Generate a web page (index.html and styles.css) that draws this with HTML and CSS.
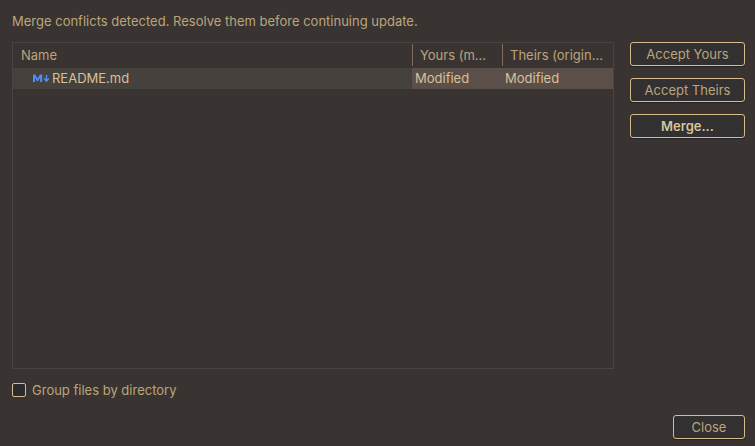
FILE: index.html
```html
<!DOCTYPE html>
<html lang="en">
<head>
<meta charset="utf-8">
<title>Conflicts</title>
<link rel="stylesheet" href="styles.css">
</head>
<body>
<main class="dialog">
  <p class="message">Merge conflicts detected. Resolve them before continuing update.</p>
  <div class="content">
    <div class="files">
      <table class="table">
        <colgroup><col><col class="col-yours"><col class="col-theirs"></colgroup>
        <thead>
          <tr>
            <th scope="col"><div class="head">Name</div></th>
            <th scope="col"><div class="head divided">Yours (m...</div></th>
            <th scope="col"><div class="head divided">Theirs (origin...</div></th>
          </tr>
        </thead>
        <tbody>
          <tr>
            <td>
              <div class="file">
                <svg class="icon" width="16" height="16" viewBox="0 0 16 16" aria-hidden="true">
                  <path d="M0 12V4.500h2.300L4.600 8.500l2.300-4H9.200V12H7.100V7.800L5.300 11H3.900L2.100 7.800V12z" fill="#548af7"/>
                  <path d="M13.500 5v6M11 8.500l2.500 2.600L16 8.500" fill="none" stroke="#548af7" stroke-width="1.500"/>
                </svg>
                <span>README.md</span>
              </div>
            </td>
            <td class="status">Modified</td>
            <td class="status">Modified</td>
          </tr>
        </tbody>
      </table>
    </div>
    <div class="actions">
      <button class="button" type="button">Accept Yours</button>
      <button class="button" type="button">Accept Theirs</button>
      <button class="button primary" type="button">Merge...</button>
    </div>
  </div>
  <label class="group"><input class="check" type="checkbox">Group files by directory</label>
  <footer class="footer">
    <button class="button close" type="button">Close</button>
  </footer>
</main>
</body>
</html>
```
FILE: styles.css
```css
* {
  box-sizing: border-box;
}

body {
  margin: 0;
  background: #393432;
  color: #bba67c;
  font: 13px/16px Inter, "Liberation Sans", sans-serif;
}

.dialog {
  display: flex;
  flex-direction: column;
  min-height: 100vh;
  padding: 13px 10px 7px 12px;
}

.message {
  margin: 0 0 13px;
}

.content {
  display: flex;
  flex: 1;
  gap: 16px;
}

.files {
  flex: 1;
  min-width: 0;
  border: 1px solid #474544;
}

.table {
  width: 100%;
  table-layout: fixed;
  border-collapse: collapse;
}

.col-yours {
  width: 90px;
}

.col-theirs {
  width: 111px;
}

th {
  height: 25px;
  padding: 1px 0 0;
  font-weight: 400;
  text-align: left;
  vertical-align: top;
}

.head {
  padding: 3px 8px;
  overflow: hidden;
  white-space: nowrap;
}

.divided {
  padding-left: 7px;
  border-left: 1px solid #7e6b60;
}

td {
  height: 21px;
  padding: 2px 0 0;
  background: #45413c;
  color: #d8c09a;
  vertical-align: top;
}

.status {
  padding-left: 3px;
  background: #5a5049;
}

.file {
  display: flex;
  align-items: center;
  gap: 3px;
  padding-left: 20px;
}

.icon {
  flex: none;
}

.actions {
  display: flex;
  flex-direction: column;
  gap: 12px;
  width: 115px;
}

.button {
  height: 24px;
  padding: 0 8px;
  border: 1px solid #d7bd8d;
  border-radius: 3px;
  background: #323031;
  box-shadow: 0 1px 1px #252122;
  color: #bba67c;
  font: inherit;
}

.primary {
  color: #d8c49c;
  font-weight: 600;
}

.group {
  display: flex;
  align-items: center;
  align-self: flex-start;
  gap: 6px;
  margin-top: 13px;
}

.check {
  width: 14px;
  height: 14px;
  margin: 0;
  appearance: none;
  border: 1px solid #d7bd8d;
  border-radius: 2px;
  background: #2b2b2b;
}

.check:checked {
  background: #d7bd8d;
}

.footer {
  display: flex;
  justify-content: flex-end;
  margin-top: 17px;
}

.close {
  width: 72px;
}
```
